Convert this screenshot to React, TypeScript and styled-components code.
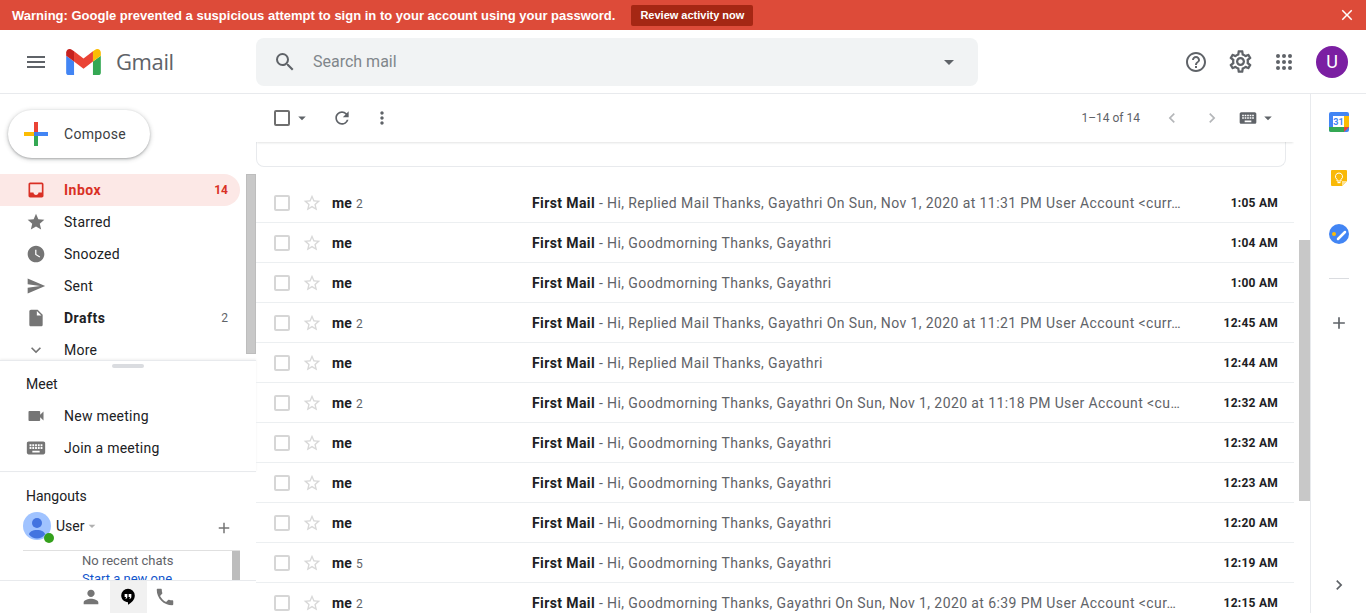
import React from 'react';
import styled, { createGlobalStyle } from 'styled-components';
import {
  MdAdd,
  MdArrowDropDown,
  MdChevronLeft,
  MdChevronRight,
  MdClose,
  MdExpandMore,
  MdInbox,
  MdInsertDriveFile,
  MdKeyboard,
  MdMoreVert,
  MdOutlineHelpOutline,
  MdOutlineSettings,
  MdPerson,
  MdPhone,
  MdRefresh,
  MdSearch,
  MdSend,
  MdStar,
  MdStarBorder,
  MdVideocam,
  MdWatchLater,
  MdMenu,
} from 'react-icons/md';

const GlobalStyle = createGlobalStyle`
  html, body {
    margin: 0;
    height: 100%;
    overflow: hidden;
    background: #fff;
    font-family: Roboto, "Liberation Sans", Arial, sans-serif;
    font-size: 14px;
    color: #202124;
  }
  * { box-sizing: border-box; }
`;

const Page = styled.div`
  width: 1366px;
  height: 613px;
  display: flex;
  flex-direction: column;
  overflow: hidden;
`;

const Banner = styled.div`
  height: 30px;
  flex: none;
  background: #dd4b39;
  color: #fff;
  display: flex;
  align-items: center;
  padding-left: 12px;
  font-family: "Liberation Sans", Arial, sans-serif;
  font-weight: 700;
  font-size: 13px;
`;

const BannerButton = styled.span`
  margin-left: 16px;
  height: 21px;
  width: 122px;
  display: flex;
  align-items: center;
  justify-content: center;
  background: #a52714;
  border-radius: 2px;
  font-size: 11px;
`;

const BannerClose = styled.span`
  margin-left: auto;
  margin-right: 10px;
  display: flex;
  font-size: 18px;
`;

const Header = styled.header`
  height: 64px;
  flex: none;
  display: flex;
  align-items: center;
  border-bottom: 1px solid #e8eaed;
  color: #5f6368;
`;

const Brand = styled.div`
  width: 256px;
  flex: none;
  display: flex;
  align-items: center;
  padding-left: 24px;
  font-size: 24px;
`;

const LogoMark = styled.svg`
  width: 35px;
  height: 26px;
  margin: 0 15px 0 18px;
`;

const BrandName = styled.span`
  font-family: "Open Sans", Roboto, sans-serif;
  font-size: 22px;
  letter-spacing: -0.4px;
  margin-top: -2px;
`;

const SearchBox = styled.div`
  width: 722px;
  height: 48px;
  border-radius: 8px;
  background: #f1f3f4;
  display: flex;
  align-items: center;
  padding: 0 17px 0 17px;
  font-size: 24px;
`;

const SearchText = styled.span`
  flex: 1;
  margin-left: 16px;
  font-size: 16px;
  color: #80868b;
`;

const HeaderActions = styled.div`
  margin-left: auto;
  display: flex;
  align-items: center;
  padding-right: 18px;
  font-size: 24px;
  svg {
    display: block;
    margin-right: 20px;
  }
`;

const SettingsIcon = styled(MdOutlineSettings)`
  && {
    font-size: 27px;
    margin: 0 18.5px 0 -1.5px;
  }
`;

const Avatar = styled.div`
  width: 32px;
  height: 32px;
  border-radius: 50%;
  background: #7b1fa2;
  color: #fff;
  font-size: 18px;
  display: flex;
  align-items: center;
  justify-content: center;
`;

const Body = styled.div`
  flex: 1;
  min-height: 0;
  display: flex;
`;

const Sidebar = styled.aside`
  width: 256px;
  flex: none;
  display: flex;
  flex-direction: column;
`;

const ComposeArea = styled.div`
  height: 80px;
  flex: none;
  padding: 16px 0 0 8px;
`;

const ComposeButton = styled.div`
  width: 142px;
  height: 48px;
  border-radius: 24px;
  background: #fff;
  box-shadow: 0 1px 2px rgba(60, 64, 67, 0.3), 0 1px 4px 1px rgba(60, 64, 67, 0.2);
  display: flex;
  align-items: center;
  padding-left: 16px;
  color: #3c4043;
  letter-spacing: 0.3px;
  svg {
    margin-right: 16px;
  }
`;

const NavPane = styled.div`
  height: 186px;
  flex: none;
  display: flex;
  overflow: hidden;
`;

const NavList = styled.nav`
  width: 246px;
  flex: none;
`;

const NavRow = styled.div<{ $active?: boolean; $bold?: boolean }>`
  width: 240px;
  height: 32px;
  display: flex;
  align-items: center;
  padding: 0 12px 0 26px;
  border-radius: 0 16px 16px 0;
  background: ${(p) => (p.$active ? '#fce8e6' : 'transparent')};
  color: ${(p) => (p.$active ? '#d93025' : '#202124')};
  font-weight: ${(p) => (p.$bold ? 700 : 400)};
  letter-spacing: ${(p) => (p.$bold ? 0.5 : 0.25)}px;
  svg {
    flex: none;
    font-size: 20px;
    color: ${(p) => (p.$active ? '#d93025' : '#757575')};
    margin-right: 18px;
  }
`;

const JoinIcon = styled(MdKeyboard)`
  && {
    font-size: 22px;
    margin: 0 17px 0 -1px;
  }
`;

const NavCount = styled.span<{ $bold?: boolean }>`
  margin-left: auto;
  font-size: 12px;
  letter-spacing: 0;
  font-weight: ${(p) => (p.$bold ? 700 : 400)};
  color: ${(p) => (p.$bold ? '#d93025' : '#5f6368')};
`;

const NavThumb = styled.div`
  width: 10px;
  height: 180px;
  background: #c8c8c8;
  border: 1px solid #bdbdbd;
`;

const MeetSection = styled.section`
  height: 112px;
  flex: none;
  border-top: 1px solid #e8eaed;
  border-bottom: 1px solid #e8eaed;
  box-shadow: 0 -1px 2px rgba(60, 64, 67, 0.08);
  background: #fff;
  display: flex;
  flex-direction: column;
`;

const DragHandle = styled.div`
  width: 32px;
  height: 4px;
  margin: 3px auto 0;
  border-radius: 2px;
  background: #dadce0;
`;

const SectionTitle = styled.div`
  padding-left: 26px;
  margin: 8px 0 8px;
  line-height: 16px;
`;

const Hangouts = styled.section`
  flex: 1;
  min-height: 0;
  display: flex;
  flex-direction: column;
`;

const HangoutsTitle = styled.div`
  line-height: 16px;
  padding: 16px 0 0 26px;
`;

const UserRow = styled.div`
  display: flex;
  align-items: center;
  height: 31px;
  margin-top: 6px;
  padding: 0 0 0 23px;
  font-size: 14px;
`;

const UserPicture = styled.div`
  position: relative;
  width: 28px;
  height: 28px;
  margin: 0 5px 0 0;
  flex: none;
`;

const StatusDot = styled.span`
  position: absolute;
  right: -3px;
  bottom: -3px;
  width: 10px;
  height: 10px;
  border-radius: 50%;
  background: #34a01c;
`;

const UserCaret = styled.span`
  display: flex;
  color: #b0b0b0;
  font-size: 16px;
`;

const UserAdd = styled.span`
  display: flex;
  margin-left: auto;
  margin-right: 23px;
  margin-top: 5px;
  color: #757575;
  font-size: 18px;
`;

const ChatPane = styled.div`
  flex: 1;
  min-height: 0;
  margin: 9px 16px 0 23px;
  padding-left: 59px;
  border-top: 1px solid #e0e0e0;
  display: flex;
  justify-content: space-between;
  overflow: hidden;
  font-size: 13px;
  line-height: 18px;
  color: #5f6368;
`;

const ChatText = styled.div`
  padding-top: 1px;
`;

const ChatLink = styled.div`
  color: #1155cc;
`;

const ChatThumb = styled.div`
  width: 8px;
  background: #bdbdbd;
`;

const HangoutTabs = styled.div`
  height: 33px;
  flex: none;
  border-top: 1px solid #e8eaed;
  display: flex;
  justify-content: center;
`;

const HangoutTab = styled.div<{ $active?: boolean }>`
  width: 37px;
  display: flex;
  align-items: center;
  justify-content: center;
  background: ${(p) => (p.$active ? '#f1f1f1' : 'transparent')};
  color: #757575;
  font-size: 22px;
`;

const Main = styled.main`
  width: 1054px;
  flex: none;
  display: flex;
  min-width: 0;
`;

const MailColumn = styled.div`
  width: 1038px;
  flex: none;
  display: flex;
  flex-direction: column;
  overflow: hidden;
`;

const Toolbar = styled.div`
  height: 48px;
  flex: none;
  display: flex;
  align-items: center;
  padding: 0 17px 0 16px;
  color: #5f6368;
  position: relative;
  box-shadow: 0 2px 2px -1px rgba(60, 64, 67, 0.15);
  background: #fff;
`;

const ToolIcon = styled.span<{ $size?: number; $gap?: number; $muted?: boolean }>`
  display: flex;
  font-size: ${(p) => p.$size ?? 20}px;
  margin-left: ${(p) => p.$gap ?? 0}px;
  color: ${(p) => (p.$muted ? '#b4b6b9' : 'inherit')};
`;

const Check = styled.span<{ $light?: boolean }>`
  flex: none;
  width: 16px;
  height: 16px;
  margin-left: 2px;
  border: 2px solid ${(p) => (p.$light ? '#d6d6d6' : '#6f6f6f')};
  border-radius: 2px;
`;

const PageCount = styled.span`
  margin-left: auto;
  font-size: 12px;
  color: #5f6368;
`;

const PromoBox = styled.div`
  height: 25px;
  flex: none;
  width: 1030px;
  border: 1px solid #e8eaed;
  border-top: none;
  border-radius: 0 0 8px 8px;
`;

const MailList = styled.div`
  padding-top: 16px;
`;

const Row = styled.div`
  height: 40px;
  display: flex;
  align-items: center;
  padding: 0 16px;
  border-bottom: 1px solid #eceff1;
  white-space: nowrap;
`;

const StarIcon = styled.span`
  display: flex;
  margin-left: 12px;
  font-size: 20px;
  color: #d8d8d8;
`;

const Sender = styled.div`
  width: 200px;
  flex: none;
  margin-left: 10px;
  font-weight: 700;
  letter-spacing: 0.2px;
  color: #202124;
`;

const ThreadCount = styled.span`
  margin-left: 4px;
  font-size: 12px;
  font-weight: 400;
  color: #5f6368;
`;

const Snippet = styled.div`
  width: 652px;
  flex: none;
  overflow: hidden;
  letter-spacing: 0.4px;
  color: #5f6368;
  b {
    font-weight: 700;
    color: #202124;
  }
`;

const Time = styled.div`
  margin-left: auto;
  font-size: 12px;
  font-weight: 700;
  letter-spacing: 0.25px;
  color: #202124;
`;

const ScrollLane = styled.div`
  width: 16px;
  flex: none;
  padding: 146px 0 0 5px;
`;

const ScrollThumb = styled.div`
  width: 11px;
  height: 261px;
  background: #c8c8c8;
`;

const Rail = styled.aside`
  width: 56px;
  flex: none;
  border-left: 1px solid #e8eaed;
  display: flex;
  flex-direction: column;
  align-items: center;
  padding-top: 18px;
`;

const RailIcon = styled.svg`
  display: block;
  width: 20px;
  height: 20px;
  & + & {
    margin-top: 36px;
  }
`;

const RailDivider = styled.div`
  width: 20px;
  height: 1px;
  background: #dadce0;
  margin-top: 34px;
`;

const RailPlus = styled.span`
  display: flex;
  margin-top: 34px;
  font-size: 20px;
  color: #5f6368;
`;

const RailToggle = styled.span`
  display: flex;
  margin-top: auto;
  margin-bottom: 18px;
  font-size: 20px;
  color: #5f6368;
`;

const GmailLogo = () => (
  <LogoMark viewBox="52 42 88 66">
    <path fill="#4285f4" d="M58 108h14V74L52 59v43c0 3.32 2.69 6 6 6" />
    <path fill="#34a853" d="M120 108h14c3.32 0 6-2.69 6-6V59l-20 15" />
    <path fill="#fbbc04" d="M120 48v26l20-15v-8c0-7.42-8.47-11.65-14.4-7.2" />
    <path fill="#ea4335" d="M72 74V48l24 18 24-18v26L96 92" />
    <path fill="#c5221f" d="M52 51v8l20 15V48l-5.6-4.2c-5.94-4.45-14.4-.22-14.4 7.2" />
  </LogoMark>
);

const ComposePlus = () => (
  <svg width="24" height="24" viewBox="0 0 24 24">
    <path fill="#ea4335" d="M10 0h4v10h-4z" />
    <path fill="#4285f4" d="M14 10h10v4H14z" />
    <path fill="#34a853" d="M10 14h4v10h-4z" />
    <path fill="#fbbc04" d="M0 10h10v4H0z" />
    <path fill="#3f7ee8" d="M10 10h4v4h-4z" />
  </svg>
);

const AppsDots = () => (
  <svg width="24" height="24" viewBox="0 0 24 24" fill="#5f6368">
    {[6, 12, 18].map((y) =>
      [6, 12, 18].map((x) => <circle key={`${x}-${y}`} cx={x} cy={y} r="2" />),
    )}
  </svg>
);

const UserGlyph = () => (
  <svg width="28" height="28" viewBox="0 0 28 28">
    <circle cx="14" cy="14" r="14" fill="#a0c3ff" />
    <circle cx="14" cy="11" r="5" fill="#4374e0" />
    <path fill="#4374e0" d="M14 18c-4.5 0-8 1.8-8 4.5C8 25 11 26.500 14 26.500s6-1.500 8-4C22 19.800 18.500 18 14 18z" />
  </svg>
);

const HangoutsBubble = () => (
  <svg width="16" height="17.600" viewBox="0 0 20 22">
    <path fill="#000" d="M10 1a8.500 8.500 0 0 0-8.500 8.500c0 4.700 3.800 8.200 8.500 8.200V21c4.500-2.200 8.500-6.300 8.500-11.500A8.500 8.500 0 0 0 10 1z" />
    <path fill="#fff" d="M5.800 7.500h3.400v3.400c0 1.300-.8 2.400-2 2.700l-.4-1c.5-.3.8-.7.8-1.400H5.800zM10.800 7.500h3.400v3.400c0 1.300-.8 2.400-2 2.700l-.4-1c.5-.3.8-.7.8-1.400h-1.800z" />
  </svg>
);

const CalendarIcon = () => (
  <RailIcon viewBox="0 0 20 20">
    <rect x="0" y="0" width="20" height="20" rx="2" fill="#4285f4" />
    <path fill="#fbbc04" d="M15 4h5v11h-5z" />
    <path fill="#34a853" d="M0 15h15v5H2a2 2 0 0 1-2-2z" />
    <path fill="#ea4335" d="M15 15h5l-5 5z" />
    <rect x="4" y="4" width="11" height="11" fill="#fff" />
    <text x="9.500" y="13" fontSize="9" fontWeight="700" fill="#4285f4" textAnchor="middle" fontFamily="Roboto, sans-serif">31</text>
  </RailIcon>
);

const KeepIcon = () => (
  <RailIcon viewBox="0 0 20 20">
    <path fill="#f9b908" d="M3 2h14a1 1 0 0 1 1 1v10l-5 5H3a1 1 0 0 1-1-1V3a1 1 0 0 1 1-1z" />
    <path fill="#fde293" d="M13 13h5l-5 5z" />
    <path fill="none" stroke="#fff" strokeWidth="1" d="M10 5a3.500 3.500 0 0 0-2 6.400V13h4v-1.600A3.500 3.500 0 0 0 10 5z" />
    <path fill="#fff" d="M8.500 14h3v1.200h-3z" />
  </RailIcon>
);

const TasksIcon = () => (
  <RailIcon viewBox="0 0 20 20">
    <circle cx="10" cy="10" r="10" fill="#4285f4" />
    <path fill="none" stroke="#fff" strokeWidth="2.500" strokeLinecap="round" d="M9 15l7-7" />
    <circle cx="5" cy="10" r="2" fill="#fbbc04" />
  </RailIcon>
);

const navItems = [
  { label: 'Starred', icon: <MdStar /> },
  { label: 'Snoozed', icon: <MdWatchLater /> },
  { label: 'Sent', icon: <MdSend /> },
];

const mails = [
  { count: 2, snippet: 'Hi, Replied Mail Thanks, Gayathri On Sun, Nov 1, 2020 at 11:31 PM User Account <curr…', time: '1:05 AM' },
  { snippet: 'Hi, Goodmorning Thanks, Gayathri', time: '1:04 AM' },
  { snippet: 'Hi, Goodmorning Thanks, Gayathri', time: '1:00 AM' },
  { count: 2, snippet: 'Hi, Replied Mail Thanks, Gayathri On Sun, Nov 1, 2020 at 11:21 PM User Account <curr…', time: '12:45 AM' },
  { snippet: 'Hi, Replied Mail Thanks, Gayathri', time: '12:44 AM' },
  { count: 2, snippet: 'Hi, Goodmorning Thanks, Gayathri On Sun, Nov 1, 2020 at 11:18 PM User Account <cu…', time: '12:32 AM' },
  { snippet: 'Hi, Goodmorning Thanks, Gayathri', time: '12:32 AM' },
  { snippet: 'Hi, Goodmorning Thanks, Gayathri', time: '12:23 AM' },
  { snippet: 'Hi, Goodmorning Thanks, Gayathri', time: '12:20 AM' },
  { count: 5, snippet: 'Hi, Goodmorning Thanks, Gayathri', time: '12:19 AM' },
  { count: 2, snippet: 'Hi, Goodmorning Thanks, Gayathri On Sun, Nov 1, 2020 at 6:39 PM User Account <cur…', time: '12:15 AM' },
];

const App: React.FC = () => (
  <Page>
    <GlobalStyle />
    <Banner>
      Warning: Google prevented a suspicious attempt to sign in to your account using your password.
      <BannerButton>Review activity now</BannerButton>
      <BannerClose>
        <MdClose />
      </BannerClose>
    </Banner>
    <Header>
      <Brand>
        <MdMenu />
        <GmailLogo />
        <BrandName>Gmail</BrandName>
      </Brand>
      <SearchBox>
        <MdSearch />
        <SearchText>Search mail</SearchText>
        <MdArrowDropDown />
      </SearchBox>
      <HeaderActions>
        <MdOutlineHelpOutline />
        <SettingsIcon />
        <AppsDots />
        <Avatar>U</Avatar>
      </HeaderActions>
    </Header>
    <Body>
      <Sidebar>
        <ComposeArea>
          <ComposeButton>
            <ComposePlus />
            Compose
          </ComposeButton>
        </ComposeArea>
        <NavPane>
          <NavList>
            <NavRow $active $bold>
              <MdInbox />
              Inbox
              <NavCount $bold>14</NavCount>
            </NavRow>
            {navItems.map((item) => (
              <NavRow key={item.label}>
                {item.icon}
                {item.label}
              </NavRow>
            ))}
            <NavRow $bold>
              <MdInsertDriveFile />
              Drafts
              <NavCount>2</NavCount>
            </NavRow>
            <NavRow>
              <MdExpandMore />
              More
            </NavRow>
          </NavList>
          <NavThumb />
        </NavPane>
        <MeetSection>
          <DragHandle />
          <SectionTitle>Meet</SectionTitle>
          <NavRow>
            <MdVideocam />
            New meeting
          </NavRow>
          <NavRow>
            <JoinIcon />
            Join a meeting
          </NavRow>
        </MeetSection>
        <Hangouts>
          <HangoutsTitle>Hangouts</HangoutsTitle>
          <UserRow>
            <UserPicture>
              <UserGlyph />
              <StatusDot />
            </UserPicture>
            User
            <UserCaret>
              <MdArrowDropDown />
            </UserCaret>
            <UserAdd>
              <MdAdd />
            </UserAdd>
          </UserRow>
          <ChatPane>
            <ChatText>
              No recent chats
              <ChatLink>Start a new one</ChatLink>
            </ChatText>
            <ChatThumb />
          </ChatPane>
          <HangoutTabs>
            <HangoutTab>
              <MdPerson />
            </HangoutTab>
            <HangoutTab $active>
              <HangoutsBubble />
            </HangoutTab>
            <HangoutTab>
              <MdPhone />
            </HangoutTab>
          </HangoutTabs>
        </Hangouts>
      </Sidebar>
      <Main>
        <MailColumn>
          <Toolbar>
            <Check />
            <ToolIcon $size={18} $gap={3}>
              <MdArrowDropDown />
            </ToolIcon>
            <ToolIcon $gap={21}>
              <MdRefresh />
            </ToolIcon>
            <ToolIcon $gap={20}>
              <MdMoreVert />
            </ToolIcon>
            <PageCount>1–14 of 14</PageCount>
            <ToolIcon $gap={22} $muted>
              <MdChevronLeft />
            </ToolIcon>
            <ToolIcon $gap={20} $muted>
              <MdChevronRight />
            </ToolIcon>
            <ToolIcon $gap={16}>
              <MdKeyboard />
            </ToolIcon>
            <ToolIcon $size={18} $gap={1}>
              <MdArrowDropDown />
            </ToolIcon>
          </Toolbar>
          <PromoBox />
          <MailList>
            {mails.map((mail, i) => (
              <Row key={i}>
                <Check $light />
                <StarIcon>
                  <MdStarBorder />
                </StarIcon>
                <Sender>
                  me
                  {mail.count && <ThreadCount>{mail.count}</ThreadCount>}
                </Sender>
                <Snippet>
                  <b>First Mail</b> - {mail.snippet}
                </Snippet>
                <Time>{mail.time}</Time>
              </Row>
            ))}
          </MailList>
        </MailColumn>
        <ScrollLane>
          <ScrollThumb />
        </ScrollLane>
      </Main>
      <Rail>
        <CalendarIcon />
        <KeepIcon />
        <TasksIcon />
        <RailDivider />
        <RailPlus>
          <MdAdd />
        </RailPlus>
        <RailToggle>
          <MdChevronRight />
        </RailToggle>
      </Rail>
    </Body>
  </Page>
);

export default App;
